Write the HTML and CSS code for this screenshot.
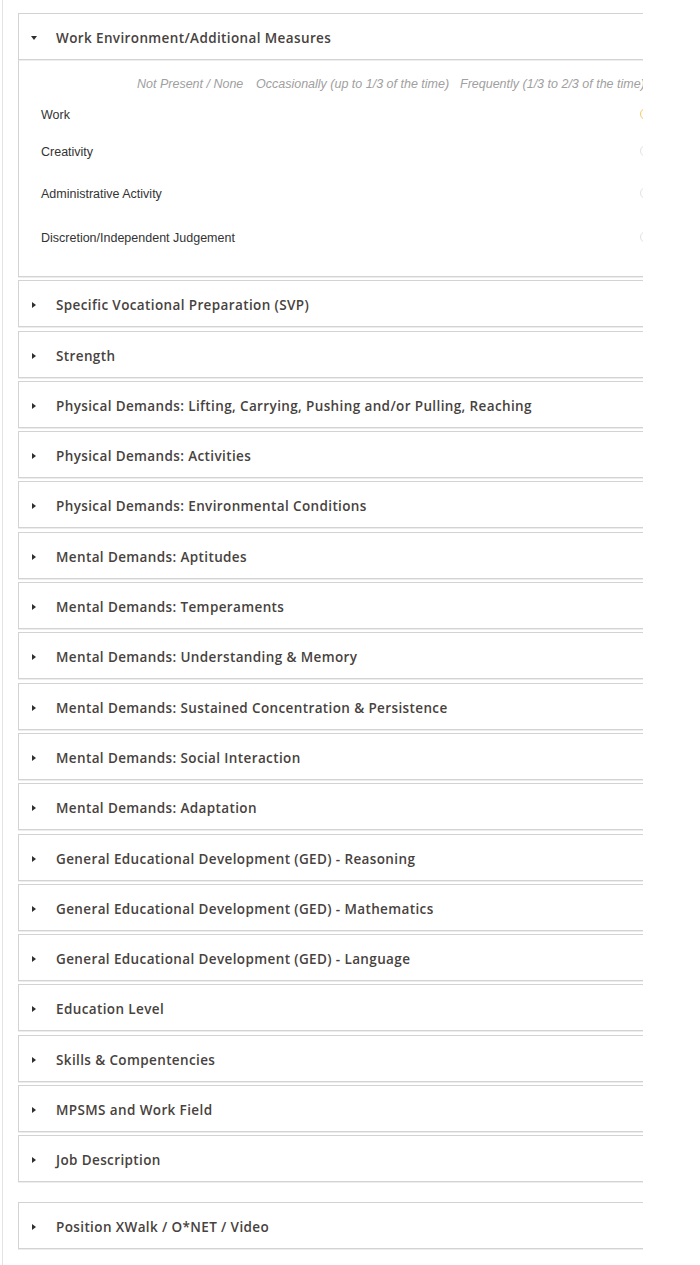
FILE: index.html
```html
<!DOCTYPE html>
<html lang="en">
<head>
<meta charset="utf-8">
<title>Position Profile</title>
<link rel="stylesheet" href="styles.css">
</head>
<body>
<div class="page">

  <section class="panel open">
    <div class="panel-head"><span class="caret down"></span><span class="title">Work Environment/Additional Measures</span></div>
    <div class="panel-body">
      <div class="measure-grid">
        <div class="col-spacer"></div>
        <div class="col-head">Not Present / None</div>
        <div class="col-head">Occasionally (up to 1/3 of the time)</div>
        <div class="col-head">Frequently (1/3 to 2/3 of the time)</div>

        <div class="measure">Work</div><div></div><div></div><div class="pick"><span class="radio on"></span></div>
        <div class="measure">Creativity</div><div></div><div></div><div class="pick"><span class="radio"></span></div>
        <div class="measure">Administrative Activity</div><div></div><div></div><div class="pick"><span class="radio"></span></div>
        <div class="measure">Discretion/Independent Judgement</div><div></div><div></div><div class="pick"><span class="radio"></span></div>
      </div>
    </div>
  </section>

  <section class="panel"><div class="panel-head"><span class="caret"></span><span class="title">Specific Vocational Preparation (SVP)</span></div></section>
  <section class="panel"><div class="panel-head"><span class="caret"></span><span class="title">Strength</span></div></section>
  <section class="panel"><div class="panel-head"><span class="caret"></span><span class="title">Physical Demands: Lifting, Carrying, Pushing and/or Pulling, Reaching</span></div></section>
  <section class="panel"><div class="panel-head"><span class="caret"></span><span class="title">Physical Demands: Activities</span></div></section>
  <section class="panel"><div class="panel-head"><span class="caret"></span><span class="title">Physical Demands: Environmental Conditions</span></div></section>
  <section class="panel"><div class="panel-head"><span class="caret"></span><span class="title">Mental Demands: Aptitudes</span></div></section>
  <section class="panel"><div class="panel-head"><span class="caret"></span><span class="title">Mental Demands: Temperaments</span></div></section>
  <section class="panel"><div class="panel-head"><span class="caret"></span><span class="title">Mental Demands: Understanding &amp; Memory</span></div></section>
  <section class="panel"><div class="panel-head"><span class="caret"></span><span class="title">Mental Demands: Sustained Concentration &amp; Persistence</span></div></section>
  <section class="panel"><div class="panel-head"><span class="caret"></span><span class="title">Mental Demands: Social Interaction</span></div></section>
  <section class="panel"><div class="panel-head"><span class="caret"></span><span class="title">Mental Demands: Adaptation</span></div></section>
  <section class="panel"><div class="panel-head"><span class="caret"></span><span class="title">General Educational Development (GED) - Reasoning</span></div></section>
  <section class="panel"><div class="panel-head"><span class="caret"></span><span class="title">General Educational Development (GED) - Mathematics</span></div></section>
  <section class="panel"><div class="panel-head"><span class="caret"></span><span class="title">General Educational Development (GED) - Language</span></div></section>
  <section class="panel"><div class="panel-head"><span class="caret"></span><span class="title">Education Level</span></div></section>
  <section class="panel"><div class="panel-head"><span class="caret"></span><span class="title">Skills &amp; Compentencies</span></div></section>
  <section class="panel"><div class="panel-head"><span class="caret"></span><span class="title">MPSMS and Work Field</span></div></section>
  <section class="panel"><div class="panel-head"><span class="caret"></span><span class="title">Job Description</span></div></section>

  <section class="panel apart"><div class="panel-head"><span class="caret"></span><span class="title">Position XWalk / O*NET / Video</span></div></section>

</div>
</body>
</html>
```

FILE: styles.css
```css
html, body {
  margin: 0;
  padding: 0;
  background: #ffffff;
}

body {
  font-family: "Open Sans", "Noto Sans", sans-serif;
  color: #333333;
}

/* page column with its thin rule on the left */
.page {
  box-sizing: border-box;
  width: 641px;
  min-height: 1265px;
  margin-left: 2px;
  padding: 13px 0 0 15px;
  border-left: 1px solid #e4e4e4;
}

/* accordion panels (the right edge runs off the visible column) */
.panel {
  border: 1px solid #d3d3d3;
  border-right: none;
  margin-bottom: 3.3px;
  overflow: hidden;
  box-shadow: 0 1px 0 #ededed;
}

.panel.apart {
  margin-top: 19.6px;
}

.panel-head {
  box-sizing: border-box;
  height: 45px;
  display: flex;
  align-items: center;
  padding: 3px 0 0 11px;
}

.open .panel-head {
  border-bottom: 1px solid #d3d3d3;
  box-shadow: 0 1px 0 #eeeeee;
  height: 46px;
}

.caret {
  width: 8px;
  height: 8px;
  display: flex;
  align-items: center;
  justify-content: center;
  flex: none;
}

.caret::before {
  content: "";
  display: block;
  border-left: 4px solid #2f2f2f;
  border-top: 3px solid transparent;
  border-bottom: 3px solid transparent;
}

.caret.down::before {
  border-left: 3.5px solid transparent;
  border-right: 3.5px solid transparent;
  border-top: 4px solid #2f2f2f;
  border-bottom: none;
}

.title {
  margin-left: 18px;
  font-size: 13.5px;
  font-weight: 600;
  color: #47423e;
  white-space: nowrap;
  letter-spacing: 0.38px;
}

/* expanded body: rating grid */
.panel-body {
  height: 216px;
  padding: 16px 0 0 22px;
  box-sizing: border-box;
}

.measure-grid {
  display: grid;
  grid-template-columns: 96px 119px 204px 200px;
  grid-template-rows: 31px 37px 42px 44px 46px;
  font-family: "Liberation Sans", Arial, sans-serif;
  font-size: 12.5px;
  line-height: 16px;
}

.col-head {
  font-style: italic;
  color: #a0a0a0;
  white-space: nowrap;
}

.measure {
  color: #333333;
  white-space: nowrap;
}

.pick {
  position: relative;
}

.radio {
  position: absolute;
  left: 180px;
  top: 1px;
  width: 12px;
  height: 12px;
  border-radius: 50%;
  border: 1px solid #e2e2e2;
  box-sizing: border-box;
}

.radio.on {
  border-color: #f6c86a;
}
```
